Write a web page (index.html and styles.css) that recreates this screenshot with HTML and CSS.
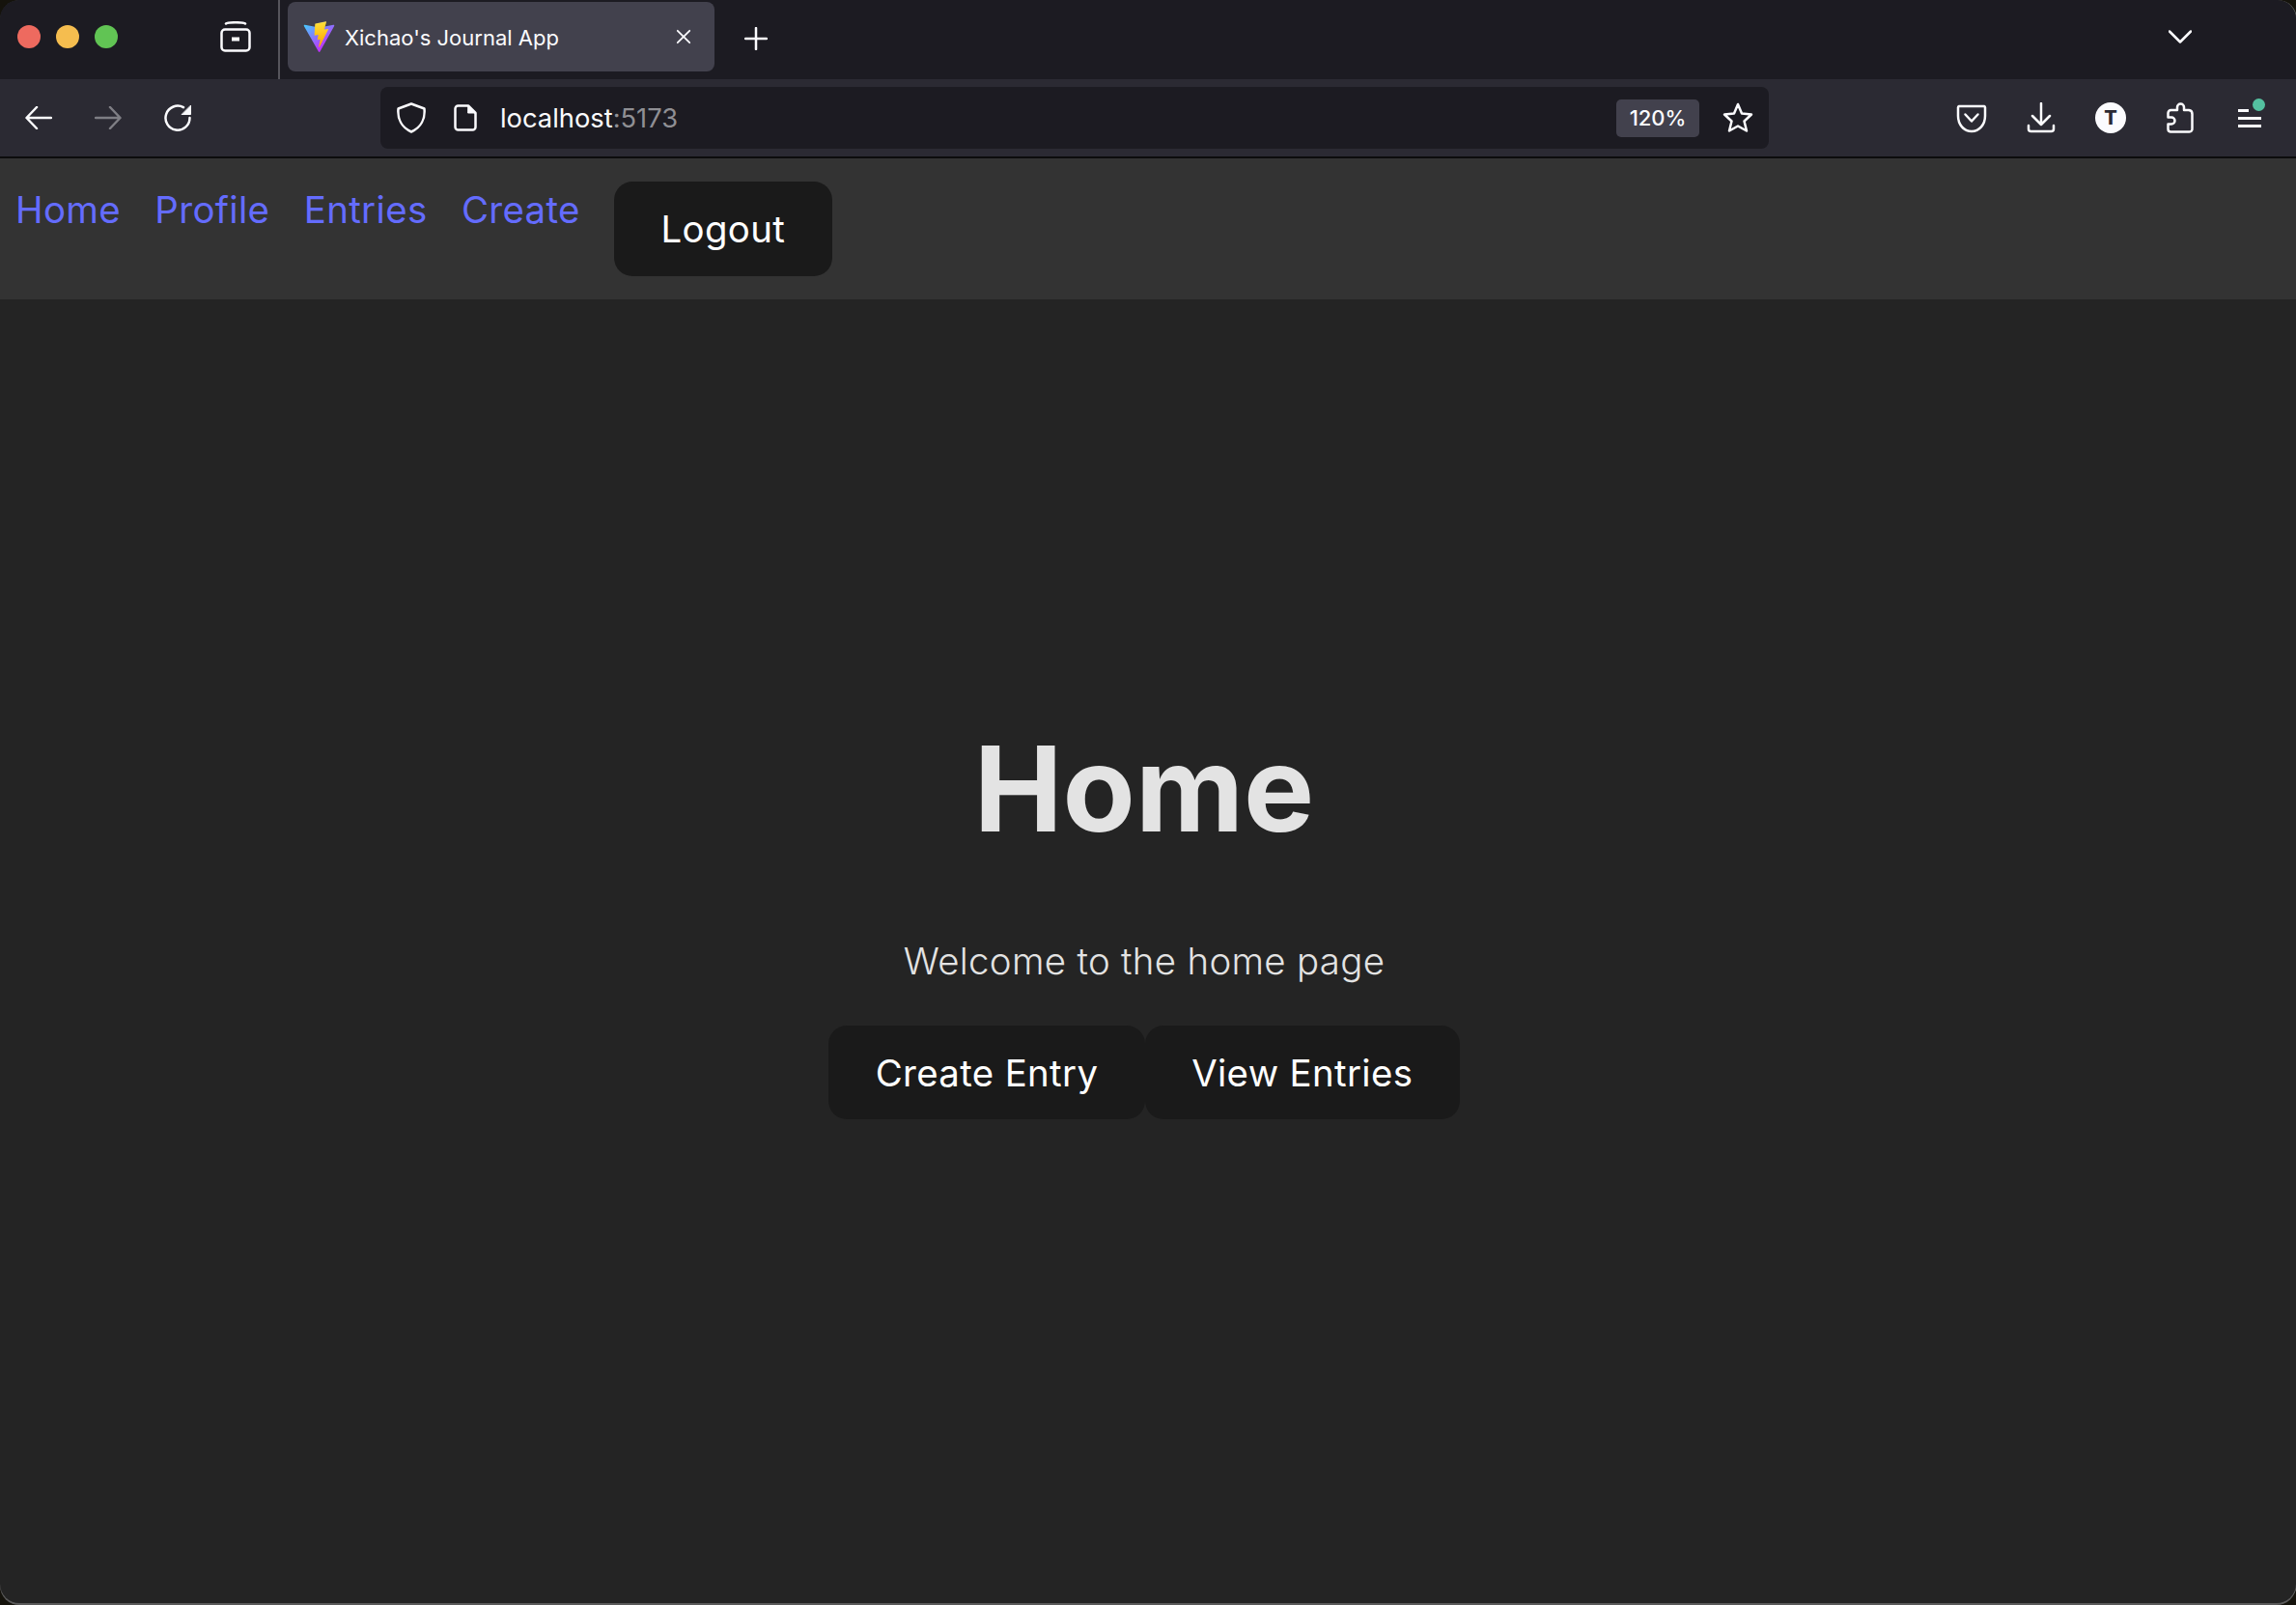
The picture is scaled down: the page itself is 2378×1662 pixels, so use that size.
FILE: index.html
```html
<!DOCTYPE html>
<html>
  <head>
    <title>Xichao's Journal App</title>
    <link rel="stylesheet" href="styles.css">
  </head>
  <body>
    <div class="window">
      <div class="tabbar">
        <div class="lights">
          <span class="light red"></span>
          <span class="light yellow"></span>
          <span class="light green"></span>
        </div>
        <svg class="icon view-icon" viewBox="0 0 32 32">
          <path d="M6 2.5 C8 0.8 24 0.8 26 2.5" />
          <rect x="1.5" y="8.5" width="29" height="22" rx="3.5" />
          <path d="M12 18.5 H20" class="thick" />
        </svg>
        <div class="separator"></div>
        <div class="tab">
          <svg class="favicon" viewBox="0 0 410 404">
            <defs>
              <linearGradient id="vite-a" x1="6" y1="33" x2="235" y2="344" gradientUnits="userSpaceOnUse">
                <stop offset="0" stop-color="#41D1FF" />
                <stop offset="1" stop-color="#BD34FE" />
              </linearGradient>
              <linearGradient id="vite-b" x1="194" y1="8" x2="236" y2="293" gradientUnits="userSpaceOnUse">
                <stop offset="0" stop-color="#FFEA83" />
                <stop offset="0.08" stop-color="#FFDD35" />
                <stop offset="1" stop-color="#FFA800" />
              </linearGradient>
            </defs>
            <path fill="url(#vite-a)" d="M399.641 59.5246L215.643 388.545C211.844 395.338 202.084 395.378 198.228 388.618L10.5817 59.5563C6.38087 52.1896 12.6802 43.2665 21.0281 44.7586L205.223 77.6824C206.398 77.8924 207.601 77.8904 208.776 77.6763L389.119 44.8058C397.439 43.2894 403.768 52.1434 399.641 59.5246Z" />
            <path fill="url(#vite-b)" d="M292.965 1.5744L156.801 28.2552C154.563 28.6937 152.906 30.5903 152.771 32.8664L144.395 174.33C144.198 177.662 147.258 180.248 150.51 179.498L188.42 170.749C191.967 169.931 195.172 173.055 194.443 176.622L183.18 231.775C182.422 235.487 185.907 238.661 189.532 237.56L212.947 230.446C216.577 229.344 220.065 232.527 219.297 236.242L201.398 322.875C200.278 328.294 207.486 331.249 210.492 326.603L212.5 323.5L323.454 102.072C325.312 98.3645 322.108 94.137 318.036 94.9228L279.014 102.454C275.347 103.161 272.227 99.746 273.262 96.1583L298.731 7.86689C299.767 4.27314 296.636 0.855181 292.965 1.5744Z" />
          </svg>
          <span class="tab-title">Xichao's Journal App</span>
          <svg class="icon tab-close" viewBox="0 0 18 18">
            <path d="M2 2 L16 16 M16 2 L2 16" />
          </svg>
        </div>
        <svg class="icon new-tab" viewBox="0 0 24 24">
          <path d="M12 1 V23 M1 12 H23" />
        </svg>
        <svg class="icon all-tabs" viewBox="0 0 24 14">
          <path d="M1 1.5 L12 12.5 L23 1.5" />
        </svg>
      </div>

      <div class="toolbar">
        <div class="nav-buttons">
          <svg class="icon nav-icon" viewBox="0 0 28 24">
            <path d="M27 12 H2 M12 1 L1.5 12 L12 23" />
          </svg>
          <svg class="icon nav-icon dim" viewBox="0 0 28 24">
            <path d="M1 12 H26 M16 1 L26.5 12 L16 23" />
          </svg>
          <svg class="icon nav-icon" viewBox="0 0 28 28">
            <path d="M26.5 14 A12.5 12.5 0 1 1 20 3.2" />
            <path d="M27.5 1.5 V10.5 H18.5 Z" class="solid" />
          </svg>
        </div>
        <div class="urlbar">
          <svg class="icon shield" viewBox="0 0 30 32">
            <path d="M15 1.5 L28.5 6.5 C29.5 17 25 26 15 30.5 C5 26 0.5 17 1.5 6.5 Z" />
          </svg>
          <svg class="icon page" viewBox="0 0 24 28">
            <path d="M15 1.5 H4.5 A3 3 0 0 0 1.5 4.5 V23.5 A3 3 0 0 0 4.5 26.5 H19.5 A3 3 0 0 0 22.5 23.5 V9 Z" />
            <path d="M15 1.5 L22.5 9 H15 Z" class="solid" />
          </svg>
          <span class="url"><span class="host">localhost</span>:5173</span>
          <span class="zoom-badge">120%</span>
          <svg class="icon star" viewBox="0 0 32 32">
            <path d="M16 2 L20 11.5 L30 12.5 L22.5 19.5 L25 29.5 L16 24.5 L7 29.5 L9.5 19.5 L2 12.5 L12 11.5 Z" />
          </svg>
        </div>
        <div class="tools">
          <svg class="icon tool" viewBox="0 0 32 32">
            <path d="M3 4 H29 A1.5 1.5 0 0 1 30 5.5 V14 C30 23 24 30 16 30 C8 30 2 23 2 14 V5.5 A1.5 1.5 0 0 1 3 4 Z" />
            <path d="M9.5 12.5 L16 19.5 L22.5 12.5" />
          </svg>
          <svg class="icon tool" viewBox="0 0 32 32">
            <path d="M16 1 V22 M7 14 L16 23 L25 14" />
            <path d="M3 24 V27.5 A2.5 2.5 0 0 0 5.5 30 H26.5 A2.5 2.5 0 0 0 29 27.5 V24" />
          </svg>
          <div class="avatar">T</div>
          <svg class="icon tool" viewBox="0 0 32 32">
            <path d="M11.5 8 H13 V5 A3.5 3.5 0 0 1 20 5 V8 H25 A4 4 0 0 1 28.5 12 V27 A3 3 0 0 1 25.5 30.5 H6 A3 3 0 0 1 3.5 27.5 V22.5 H7 A3.5 3.5 0 0 0 7 15.5 H3.5 V11 A3 3 0 0 1 6.5 8 H11.5" />
          </svg>
          <div class="menu">
            <span class="menu-line short"></span>
            <span class="menu-line"></span>
            <span class="menu-line"></span>
            <span class="menu-dot"></span>
          </div>
        </div>
      </div>

      <nav class="site-nav">
        <a href="#">Home</a>
        <a href="#">Profile</a>
        <a href="#">Entries</a>
        <a href="#">Create</a>
        <button>Logout</button>
      </nav>

      <main class="home">
        <h1>Home</h1>
        <p>Welcome to the home page</p>
        <div class="actions">
          <button>Create Entry</button>
          <button>View Entries</button>
        </div>
      </main>
    </div>
  </body>
</html>
```

FILE: styles.css
```css
* {
  box-sizing: border-box;
}

html, body {
  margin: 0;
  padding: 0;
  background: #15130c;
}

.window {
  display: flex;
  flex-direction: column;
  height: 1660px;
  margin-bottom: 2px;
  background: #242424;
  border-radius: 20px;
  box-shadow: 0 2px 0 #5a5a5a, 1px 0 0 #5a5a5a;
  overflow: hidden;
  font-family: Inter, "Liberation Sans", sans-serif;
}

.icon {
  flex: none;
  display: block;
  fill: none;
  stroke: #fbfbfe;
  stroke-width: 2.5;
  stroke-linejoin: round;
  stroke-linecap: round;
}

.icon .solid {
  fill: #fbfbfe;
  stroke-width: 1;
}

.icon .thick {
  stroke-width: 4;
  stroke-linecap: butt;
}

/* tab strip */
.tabbar {
  display: flex;
  align-items: center;
  flex: none;
  height: 82px;
  padding: 0 108px 6px 18px;
  background: #1c1b22;
}

.lights {
  display: flex;
  gap: 16px;
}

.light {
  width: 24px;
  height: 24px;
  border-radius: 50%;
}

.red { background: #ee6a5f; }
.yellow { background: #f5bd4f; }
.green { background: #61c454; }

.view-icon {
  width: 32px;
  height: 32px;
  margin-left: 106px;
}

.separator {
  align-self: stretch;
  width: 2px;
  margin: 0 0 -6px 28px;
  background: #56555c;
}

.tab {
  display: flex;
  align-items: center;
  align-self: flex-start;
  width: 442px;
  height: 72px;
  margin: 2px 0 0 8px;
  padding-left: 16px;
  background: #42414d;
  border-radius: 8px;
}

.favicon {
  flex: none;
  width: 33px;
  height: 33px;
}

.tab-title {
  margin: 2px 0 0 10px;
  color: #fbfbfe;
  font-size: 22px;
}

.tab-close {
  width: 16px;
  height: 16px;
  margin-left: auto;
  margin-right: 24px;
  stroke-width: 2;
}

.new-tab {
  width: 24px;
  height: 24px;
  margin: 3px 0 0 31px;
}

.all-tabs {
  width: 24px;
  height: 14px;
  margin-left: auto;
}

/* toolbar */
.toolbar {
  display: flex;
  align-items: center;
  flex: none;
  height: 82px;
  padding: 0 32px 0 26px;
  background: #2b2a33;
  border-bottom: 2px solid #0c0c0d;
}

.nav-buttons {
  display: flex;
  align-items: center;
  gap: 44px;
}

.nav-icon {
  width: 28px;
  height: 24px;
}

.nav-icon:last-child {
  height: 28px;
}

.nav-icon.dim {
  opacity: 0.4;
}

.urlbar {
  display: flex;
  align-items: center;
  width: 1438px;
  height: 64px;
  margin-left: 196px;
  padding: 0 16px 0 17px;
  background: #1c1b22;
  border-radius: 8px;
}

.shield {
  width: 30px;
  height: 32px;
}

.page {
  width: 24px;
  height: 28px;
  margin-left: 29px;
}

.url {
  margin-left: 24px;
  color: #8f8f94;
  font-size: 27.3px;
}

.host {
  color: #fbfbfe;
}

.zoom-badge {
  display: flex;
  align-items: center;
  justify-content: center;
  width: 86px;
  height: 39px;
  margin-left: auto;
  background: #42414d;
  border-radius: 5px;
  color: #fbfbfe;
  font-size: 22px;
  font-weight: 500;
}

.star {
  width: 32px;
  height: 32px;
  margin-left: 24px;
}

.tools {
  display: flex;
  align-items: center;
  gap: 40px;
  margin-left: auto;
}

.tool {
  width: 32px;
  height: 32px;
}

.avatar {
  display: flex;
  align-items: center;
  justify-content: center;
  width: 32px;
  height: 32px;
  background: #fbfbfe;
  border-radius: 50%;
  color: #2b2a33;
  font-size: 20px;
  font-weight: 800;
}

.menu {
  position: relative;
  display: flex;
  flex-direction: column;
  gap: 5px;
  width: 32px;
  padding: 0 4px;
}

.menu-line {
  display: block;
  width: 24px;
  height: 3px;
  background: #fbfbfe;
}

.menu-line.short {
  width: 11px;
}

.menu-dot {
  position: absolute;
  top: -11px;
  left: 19px;
  width: 13px;
  height: 13px;
  background: #54c1a0;
  border-radius: 50%;
}

/* page */
.site-nav {
  display: flex;
  align-items: flex-start;
  gap: 35.4px;
  flex: none;
  height: 146px;
  padding: 24px 16px;
  background: #333333;
  font-size: 38.4px;
  line-height: 1.5;
}

.site-nav a {
  margin-top: 1px;
  color: #646cff;
  font-weight: 430;
  letter-spacing: 0.35px;
  text-decoration: none;
}

button {
  padding: 19px 46.4px 17px;
  background: #1a1a1a;
  border: 2.4px solid transparent;
  border-radius: 19.2px;
  color: #ffffff;
  font-family: inherit;
  font-size: 38.4px;
  font-weight: 430;
  letter-spacing: 0.35px;
  line-height: 1.5;
}

.home {
  display: flex;
  flex-direction: column;
  align-items: center;
  justify-content: center;
  flex: 1;
  padding: 2px 8px 146px 0;
  color: #e3e3e3;
}

h1 {
  margin: 82px 0;
  font-size: 122.88px;
  font-weight: 700;
  line-height: 1.1;
}

.home p {
  margin: 1px 0 37.4px 0;
  font-size: 38.4px;
  font-weight: 350;
  letter-spacing: 0.32px;
  line-height: 1.5;
}

.actions {
  display: flex;
}
```
